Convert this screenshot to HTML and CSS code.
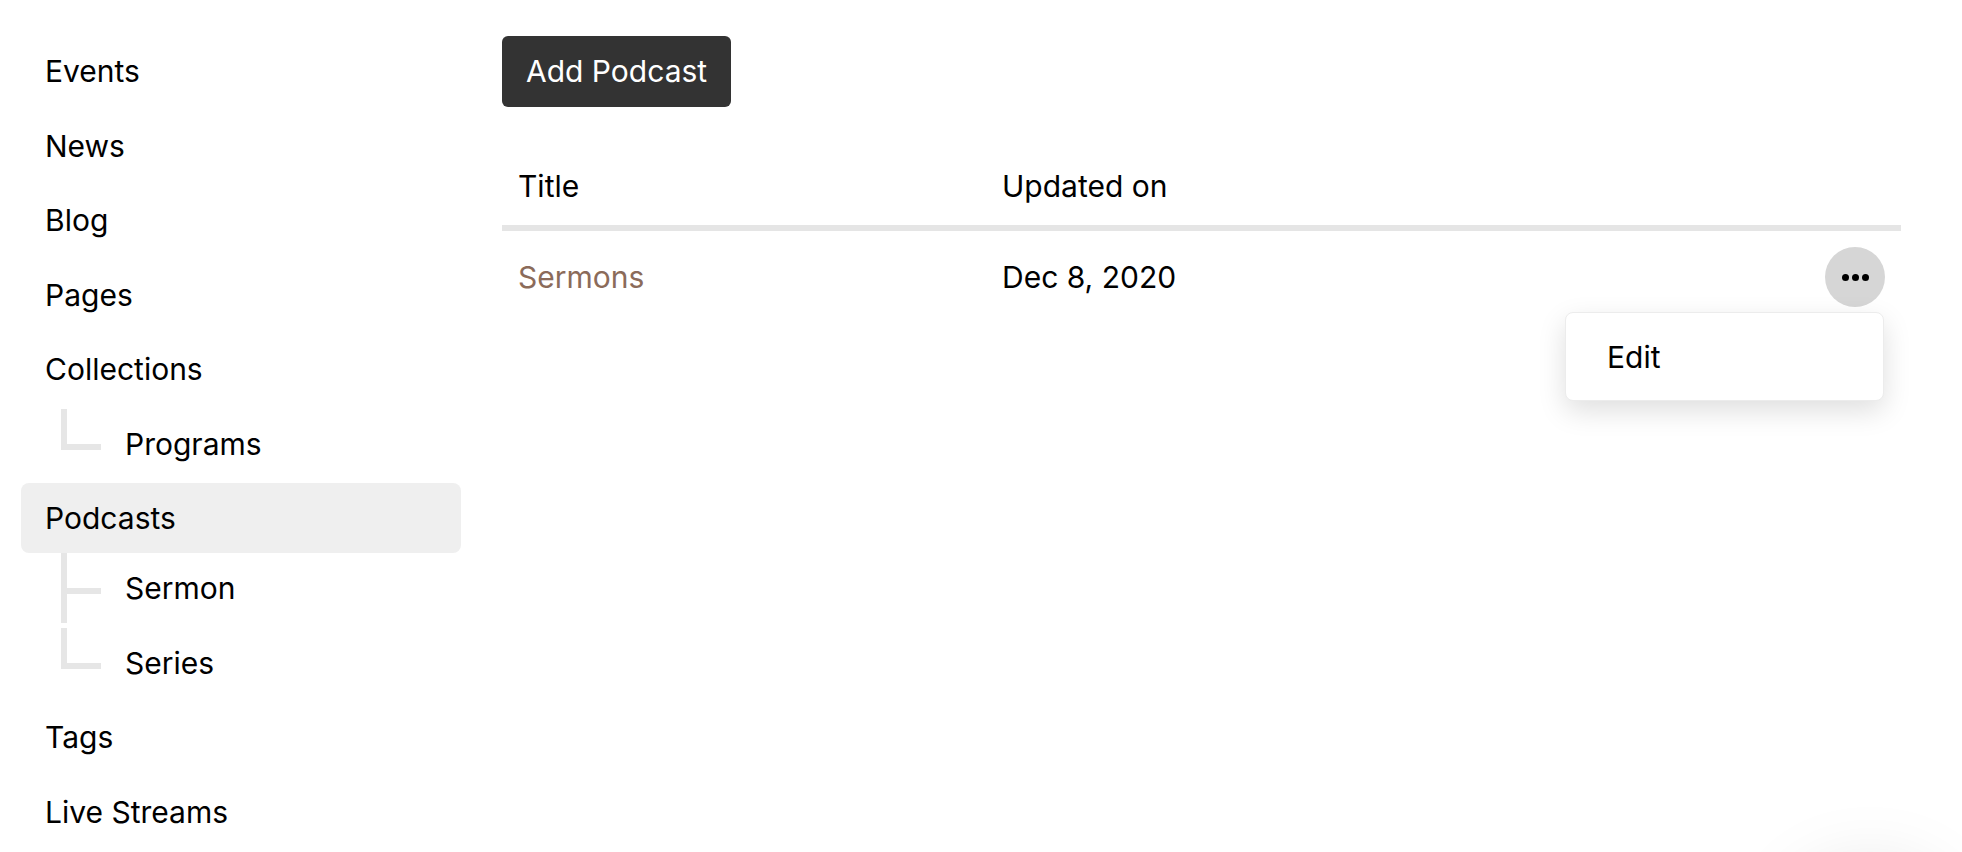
FILE: index.html
```html
<!DOCTYPE html>
<html lang="en">
<head>
<meta charset="utf-8">
<title>Podcasts</title>
<link rel="stylesheet" href="styles.css">
</head>
<body>
<div class="layout">
  <nav class="sidebar">
    <a class="nav-item">Events</a>
    <a class="nav-item">News</a>
    <a class="nav-item">Blog</a>
    <a class="nav-item">Pages</a>
    <a class="nav-item">Collections</a>
    <a class="nav-item sub last">Programs</a>
    <a class="nav-item active">Podcasts</a>
    <a class="nav-item sub">Sermon</a>
    <a class="nav-item sub last">Series</a>
    <a class="nav-item">Tags</a>
    <a class="nav-item">Live Streams</a>
  </nav>
  <main class="content">
    <button class="btn-primary">Add Podcast</button>
    <div class="table">
      <div class="table-head">
        <div class="cell col-title">Title</div>
        <div class="cell col-date">Updated on</div>
        <div class="cell col-actions"></div>
      </div>
      <div class="table-row">
        <div class="cell col-title"><a class="link">Sermons</a></div>
        <div class="cell col-date">Dec 8, 2020</div>
        <div class="cell col-actions">
          <button class="dots-btn" aria-label="More">
            <span class="dot"></span><span class="dot"></span><span class="dot"></span>
          </button>
          <div class="menu">
            <div class="menu-item">Edit</div>
          </div>
        </div>
      </div>
    </div>
  </main>
</div>
<div class="floating-shadow"></div>
</body>
</html>
```
FILE: styles.css
```css
html, body {
  margin: 0;
  padding: 0;
  background: #ffffff;
}
body {
  font-family: "Inter", "Noto Sans", "Liberation Sans", sans-serif;
  font-size: 30px;
  color: #000000;
  overflow: hidden;
  height: 852px;
}
.layout {
  display: flex;
  align-items: flex-start;
}
.sidebar {
  width: 440px;
  margin-left: 21px;
  padding-top: 36px;
  display: flex;
  flex-direction: column;
}
.nav-item {
  position: relative;
  display: block;
  height: 70px;
  line-height: 70px;
  padding-left: 24px;
  margin-bottom: 4.5px;
  border-radius: 8px;
  color: #000;
  text-decoration: none;
  cursor: pointer;
}
.nav-item.active {
  background: #efefef;
  margin-bottom: 0;
}
.nav-item.sub {
  padding-left: 104px;
}
.nav-item.sub::before {
  content: "";
  position: absolute;
  left: 40px;
  top: 0;
  width: 34px;
  height: 35px;
  border-left: 6px solid #e6e6e6;
  border-bottom: 6px solid #e6e6e6;
}
.nav-item.sub:not(.last)::after {
  content: "";
  position: absolute;
  left: 40px;
  top: 0;
  bottom: 0;
  width: 6px;
  background: #e6e6e6;
}
.content {
  flex: 0 0 1399px;
  margin-left: 41px;
  padding-top: 36px;
}
.btn-primary {
  height: 71px;
  padding: 0 24px;
  border: none;
  border-radius: 6px;
  background: #333333;
  color: #ffffff;
  font-family: inherit;
  font-size: 30px;
  line-height: 71px;
  cursor: pointer;
}
.table {
  margin-top: 44px;
}
.table-head,
.table-row {
  display: grid;
  grid-template-columns: 484px 1fr 200px;
  align-items: center;
}
.table-head {
  height: 74px;
  border-bottom: 6px solid #e5e5e5;
}
.table-head .cell {
  line-height: 70px;
  padding-bottom: 4px;
}
.table-row {
  padding: 11px 0 9px;
}
.cell {
  padding: 0 16px;
  line-height: 70px;
}
.link {
  color: #8b6b5a;
  text-decoration: none;
  cursor: pointer;
}
.col-actions {
  position: relative;
  display: flex;
  justify-content: flex-end;
  align-items: center;
  padding-right: 16px;
  height: 70px;
}
.dots-btn {
  width: 60px;
  height: 60px;
  border-radius: 50%;
  border: none;
  background: #d6d6d6;
  display: flex;
  align-items: center;
  justify-content: center;
  gap: 3px;
  padding: 0;
  cursor: pointer;
}
.dot {
  width: 7px;
  height: 7px;
  border-radius: 50%;
  background: #000;
}
.menu {
  position: absolute;
  top: 70px;
  right: 17px;
  width: 317px;
  height: 87px;
  background: #ffffff;
  border: 1px solid #ececec;
  border-radius: 8px;
  box-shadow: 0 10px 28px rgba(0, 0, 0, 0.13);
}
.menu-item {
  padding: 9px 0 0 41px;
  line-height: 70px;
}
.floating-shadow {
  position: fixed;
  left: 1790px;
  top: 875px;
  width: 160px;
  height: 160px;
  border-radius: 50%;
  background: #ffffff;
  box-shadow: 0 0 80px rgba(0, 0, 0, 0.15);
}
```
